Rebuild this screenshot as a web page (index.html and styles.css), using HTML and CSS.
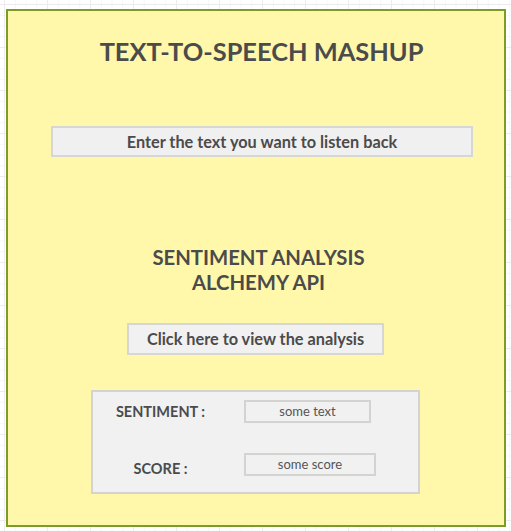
FILE: index.html
```html
<!DOCTYPE html>
<html>
<head>
<meta charset="utf-8">
<link rel="stylesheet" href="styles.css">
</head>
<body>
<div class="frame">
  <h1 class="title">TEXT-TO-SPEECH MASHUP</h1>
  <div class="input">Enter the text you want to listen back</div>
  <h2 class="heading">SENTIMENT ANALYSIS<br>ALCHEMY API</h2>
  <div class="button">Click here to view the analysis</div>
  <div class="panel">
    <div class="label">SENTIMENT :</div>
    <div class="field f1">some text</div>
    <div class="label l2">SCORE :</div>
    <div class="field f2">some score</div>
  </div>
</div>
</body>
</html>
```

FILE: styles.css
```css
html, body {
  margin: 0;
  padding: 0;
}
body {
  width: 511px;
  height: 531px;
  overflow: hidden;
  font-family: Lato, "Open Sans", sans-serif;
  color: #4b4b4b;
  background-color: #ffffff;
  background-image:
    linear-gradient(to right, #ececec 1px, transparent 1px),
    linear-gradient(to bottom, #ececec 1px, transparent 1px),
    linear-gradient(to right, #f6f6f6 1px, transparent 1px),
    linear-gradient(to bottom, #f6f6f6 1px, transparent 1px);
  background-size: 43px 43px, 43px 43px, 10.75px 10.75px, 10.75px 10.75px;
  background-position: 4px 4px;
}
.frame {
  box-sizing: border-box;
  margin: 9px 0 0 6px;
  width: 500px;
  height: 518px;
  border: 2px solid #7c9c2a;
  background: #fff8ab;
  display: flex;
  flex-direction: column;
  align-items: flex-start;
}
.title {
  margin: 25px 0 0 0;
  align-self: stretch;
  padding-left: 11px;
  text-align: center;
  font-size: 25.4px;
  line-height: 30px;
  font-weight: 700;
}
.input {
  box-sizing: border-box;
  margin: 60px 0 0 43px;
  width: 422px;
  height: 31px;
  border: 2px solid #d6d6d4;
  background: #f0f0f0;
  text-align: center;
  font-size: 16.3px;
  font-weight: 700;
  line-height: 27px;
}
.heading {
  margin: 88px 0 0 0;
  align-self: stretch;
  padding-left: 5px;
  text-align: center;
  font-size: 20.3px;
  line-height: 25px;
  font-weight: 700;
}
.button {
  box-sizing: border-box;
  margin: 28px 0 0 119px;
  width: 257px;
  height: 32px;
  border: 2px solid #d6d6d4;
  background: #f1f1f1;
  text-align: center;
  font-size: 16.3px;
  font-weight: 700;
  line-height: 28px;
}
.panel {
  box-sizing: border-box;
  margin: 35px 0 0 83px;
  width: 329px;
  height: 104px;
  border: 2px solid #d3d3d1;
  background: #f1f1f1;
  padding: 8px 0 0 7px;
  display: grid;
  grid-template-columns: 121px auto;
  grid-template-rows: 23px 23px;
  row-gap: 31px;
  column-gap: 23px;
  align-items: center;
  justify-items: start;
}
.label {
  justify-self: center;
  font-size: 14.5px;
  font-weight: 700;
  line-height: 18px;
}
.l2 {
  margin-top: 6px;
}
.field {
  box-sizing: border-box;
  height: 23px;
  border: 2px solid #d3d3d1;
  background: #f1f1f1;
  text-align: center;
  font-size: 13px;
  line-height: 19px;
  color: #555;
}
.f1 { width: 127px; }
.f2 { width: 132px; margin-top: -2px; }
```
